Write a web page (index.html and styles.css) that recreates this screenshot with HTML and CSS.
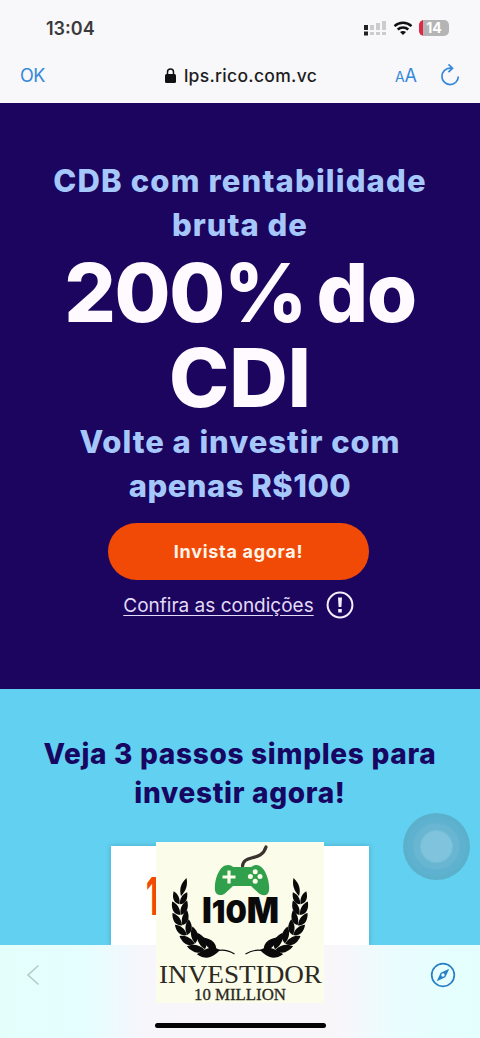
FILE: index.html
```html
<!DOCTYPE html>
<html lang="pt-BR">
<head>
  <meta charset="UTF-8" />
  <meta name="viewport" content="width=device-width, initial-scale=1.0" />
  <title>CDB 200% do CDI</title>
  <link rel="stylesheet" href="styles.css">
</head>
<body>
  <!-- Topo -->
  <header>
    <div class="status-bar">
      <span class="time">13:04</span>
      <div class="status-icons">
        <svg width="23" height="16" viewBox="0 0 23 16">
          <path fill="#222" d="M0 5h4v5H0zM0 11.500h4v4H0z"/>
          <path fill="#ccc" d="M6 5h4v5H6zM12 3h4v7h-4zM18 1h4v9h-4zM6 12h4v3H6zM12 12h4v3h-4zM18 12h4v3h-4z"/>
        </svg>
        <svg class="wifi" width="20" height="15" viewBox="0 0 20 15" fill="none" stroke="#111" stroke-width="2.500">
          <path d="M1.500 5.200C6.500.600 13.500.600 18.500 5.200M4.700 8.500c3-2.800 7.600-2.800 10.600 0"/>
          <path d="M10 14l-3-3c1.700-1.500 4.300-1.500 6 0z" fill="#111" stroke="none"/>
        </svg>
        <div class="battery"><span>14</span></div>
      </div>
    </div>
    <div class="url-bar">
      <a class="ok" href="#">OK</a>
      <div class="address">
        <svg width="11" height="15" viewBox="0 0 11 15">
          <rect x="0" y="6" width="11" height="9" rx="1.500" fill="#111"/>
          <path d="M2.500 7V4a3 3 0 0 1 6 0v3" fill="none" stroke="#111" stroke-width="1.500"/>
        </svg>
        <span>lps.rico.com.vc</span>
      </div>
      <div class="tools">
        <span class="font-size"><small>A</small>A</span>
        <svg width="20" height="22" viewBox="0 0 20 22" fill="none" stroke="#3489d9" stroke-width="1.700">
          <path d="M11 4.200H10a8.200 8.200 0 1 0 8.300 8.300"/>
          <path d="M8.500.400l4 3.800-4 3.900"/>
        </svg>
      </div>
    </div>
  </header>

  <!-- Oferta -->
  <section class="hero">
    <h2><span class="l1">CDB com rentabilidade</span><span class="l2">bruta de</span></h2>
    <h1><span class="l3">200% do</span><span class="l4">CDI</span></h1>
    <h2><span class="l5">Volte a investir com</span><span class="l6">apenas R$100</span></h2>
    <a class="btn" href="#">Invista agora!</a>
    <div class="conditions">
      <a href="#">Confira as condições</a>
      <svg width="28" height="28" viewBox="0 0 28 28">
        <circle cx="14" cy="14" r="12.400" fill="none" stroke="#f4effc" stroke-width="2"/>
        <path d="M12 6.500h4l-.6 9.500h-2.800zM12.200 18h3.600v3.400h-3.600z" fill="#f4effc"/>
      </svg>
    </div>
  </section>

  <!-- Passos -->
  <section class="steps">
    <h3><span class="l7">Veja 3 passos simples para</span><span class="l8">investir agora!</span></h3>
    <div class="card"><span class="number">1</span></div>
  </section>

  <!-- Barra inferior -->
  <footer>
    <div class="nav">
      <svg width="14" height="22" viewBox="0 0 14 22" fill="none" stroke="#b3ccc8" stroke-width="1.600">
        <path d="M12.500 1.500L2 11l10.500 9.500"/>
      </svg>
      <svg width="26" height="26" viewBox="0 0 26 26">
        <circle cx="13" cy="13" r="11.300" fill="none" stroke="#287fc6" stroke-width="1.700"/>
        <path fill="#287fc6" fill-rule="evenodd" d="M19.300 6.700l-4 8.500-8.600 4.100 4-8.500zM13 11.300a1.700 1.700 0 1 0 0 3.400 1.700 1.700 0 0 0 0-3.400z"/>
      </svg>
    </div>
    <div class="home-indicator"></div>
  </footer>

  <div class="touch"></div>

  <!-- Logo -->
  <svg class="logo" width="168" height="161" viewBox="0 0 168 161">
    <defs>
      <g id="leaves">
        <path d="M-.2 7C-7 6-9 0-7.500-7-3-5 .5 0-.2 7z"/>
        <path d="M.2 7C7 6 9 0 7.500-7 3-5-.5 0 .2 7z"/>
      </g>
      <g id="branch">
        <path d="M30.500 36c1.500 7-.5 13-5.500 18-2-7 0-13 5.500-18z"/>
        <use href="#leaves" transform="translate(24 56) rotate(4) scale(.9)"/>
        <use href="#leaves" transform="translate(24 66) rotate(-3)"/>
        <use href="#leaves" transform="translate(25 76.500) rotate(-10)"/>
        <use href="#leaves" transform="translate(28.500 86.500) rotate(-22)"/>
        <use href="#leaves" transform="translate(34.500 95.500) rotate(-36) scale(1.080)"/>
        <use href="#leaves" transform="translate(42.500 102.500) rotate(-52) scale(1.150)"/>
        <use href="#leaves" transform="translate(52 107) rotate(-68) scale(1.200)"/>
        <path d="M43 113c6-8 14-9 21-5-6 7-13 9-21 5z"/>
        <path d="M60 109c7-2 12-1 18.500 3" fill="none" stroke="#0a0a0a" stroke-width="1.200"/>
      </g>
    </defs>
    <rect width="168" height="161" fill="#fbfce9"/>
    <path d="M86.500 24c1-12 19-4 23.500-19" fill="none" stroke="#3b3230" stroke-width="3.200" stroke-linecap="round"/>
    <path fill="#31a04d" d="M69 23.500c4-1.500 7 0 8 1.500h18c2-1.500 5-3 8-1.500 7 3 11 17 10 25-1 6-7 6-11 2l-7-6.500H77L70 50.500c-4 4-10 3.500-11-2-1-9 3-22 10-25z"/>
    <path stroke="#fbfce9" stroke-width="3.200" d="M73 28.500v13M66.500 35h13"/>
    <g fill="#fbfce9">
      <circle cx="99.200" cy="29.700" r="2.500"/>
      <circle cx="99.200" cy="39.300" r="2.500"/>
      <circle cx="94.400" cy="34.500" r="2.500"/>
      <circle cx="104" cy="34.500" r="2.500"/>
    </g>
    <g fill="#0a0a0a">
      <use href="#branch"/>
      <use href="#branch" transform="translate(168 0) scale(-1 1)"/>
      <text class="brand" x="46" y="81" textLength="77" lengthAdjust="spacingAndGlyphs">I<tspan class="digits">10</tspan>M</text>
    </g>
    <text class="name" x="3" y="141" textLength="163" lengthAdjust="spacingAndGlyphs">INVESTIDOR</text>
    <text class="sub" x="38" y="157.500" textLength="92" lengthAdjust="spacingAndGlyphs">10 MILLION</text>
  </svg>
</body>
</html>
```
FILE: styles.css
```css
:root {
  --navy: #1b055f;
  --sky: #62d1f1;
  --light-blue: #a6c7fa;
  --orange: #f04a06;
  --ios-blue: #3489d9;
}

* {
  box-sizing: border-box;
  margin: 0;
  padding: 0;
}

body {
  font-family: Inter, sans-serif;
  width: 480px;
  height: 1038px;
  position: relative;
  overflow: hidden;
  display: flex;
  flex-direction: column;
}

svg {
  display: block;
}

a {
  text-decoration: none;
}

header {
  height: 103px;
  background: #f8f7f9;
}

.status-bar {
  height: 55px;
  padding: 1px 31px 0 46px;
  display: flex;
  align-items: center;
  justify-content: space-between;
}

.time {
  font-size: 18px;
  font-weight: 600;
  color: #3a3a3c;
}

.status-icons {
  display: flex;
  align-items: center;
  gap: 6px;
}

.battery {
  width: 30px;
  height: 16px;
  border-radius: 5px;
  background: linear-gradient(90deg, #dd2945 4px, #b4b4b5 4px);
  color: #fff;
  font-size: 14px;
  font-weight: 700;
  line-height: 16px;
  text-align: center;
}

.url-bar {
  height: 40px;
  padding: 0 20px;
  display: grid;
  grid-template-columns: 1fr auto 1fr;
  align-items: center;
}

.ok {
  color: var(--ios-blue);
  font-size: 18px;
  letter-spacing: -0.5px;
}

.address {
  display: flex;
  align-items: center;
  gap: 8px;
  padding-left: 2px;
  color: #1c1c1e;
  font-size: 17.5px;
  font-weight: 500;
  letter-spacing: 0.3px;
}

.tools {
  display: flex;
  align-items: center;
  justify-content: flex-end;
  gap: 23px;
}

.font-size {
  color: var(--ios-blue);
  font-size: 18px;
}

.font-size small {
  font-size: 14px;
}

.hero {
  height: 586px;
  padding-top: 56px;
  background: var(--navy);
  display: flex;
  flex-direction: column;
  align-items: center;
  text-align: center;
}

h1 span,
h2 span,
h3 span {
  display: block;
  white-space: nowrap;
}

h2 {
  color: var(--light-blue);
  font-size: 31px;
  font-weight: 800;
  line-height: 44px;
}

h1 {
  color: #fffaff;
  font-size: 81px;
  font-weight: 800;
  line-height: 85px;
  padding-top: 4px;
  margin-bottom: -1px;
}

.l1 {
  letter-spacing: 1.15px;
}

.l2 {
  letter-spacing: 1px;
}

.l3 {
  letter-spacing: -1.3px;
  word-spacing: -6px;
}

.l5 {
  letter-spacing: 0.95px;
}

.l6 {
  letter-spacing: 0.5px;
}

.l7,
.l8 {
  letter-spacing: 0.7px;
}

.btn {
  width: 261px;
  height: 57px;
  margin-top: 15px;
  margin-right: 3px;
  border-radius: 29px;
  background: var(--orange);
  color: #fff5e9;
  font-size: 18px;
  font-weight: 700;
  line-height: 57px;
  letter-spacing: 0.7px;
}

.conditions {
  display: flex;
  align-items: center;
  gap: 12px;
  margin-top: 11px;
  margin-right: 3px;
}

.conditions a {
  color: #e3daf8;
  font-size: 19px;
  text-decoration: underline;
  text-underline-offset: 3px;
}

.steps {
  height: 256px;
  padding-top: 46px;
  background: var(--sky);
  display: flex;
  flex-direction: column;
  align-items: center;
}

h3 {
  color: #170763;
  font-size: 28px;
  font-weight: 800;
  line-height: 39px;
  text-align: center;
}

.card {
  width: 258px;
  flex: 1;
  margin-top: 33px;
  padding: 19px 0 0 35px;
  background: #fff;
  box-shadow: 0 0 5px rgba(20, 80, 110, 0.35);
}

.number {
  display: inline-block;
  color: var(--orange);
  font-size: 52px;
  font-weight: 700;
  transform: scaleX(0.55);
  transform-origin: left;
}

footer {
  height: 93px;
  background: linear-gradient(90deg, #e3fffb 0, #e5feff 85px, #f7f6fb 145px, #f9f6fa 335px, #e9fdff 400px, #e3fffd 100%);
  position: relative;
}

.nav {
  display: flex;
  align-items: center;
  justify-content: space-between;
  padding: 17px 24px 0 26px;
}

.home-indicator {
  width: 171px;
  height: 5px;
  margin: 35px auto 0;
  border-radius: 3px;
  background: #050505;
}

.touch {
  position: absolute;
  left: 403px;
  top: 813px;
  width: 67px;
  height: 67px;
  border-radius: 50%;
  background: radial-gradient(circle, #7fc3dc 0 15px, #69b6d2 17px 22px, #5fb2cf 24px 28px, #5bb1cc 30px);
}

.logo {
  position: absolute;
  left: 156px;
  top: 842px;
}

.brand {
  font-size: 36px;
  font-weight: 900;
}

.digits {
  font-size: 32px;
}

.name,
.sub {
  font-family: "Liberation Serif", serif;
  fill: #2b2922;
}

.name {
  font-size: 26px;
}

.sub {
  font-size: 16px;
  stroke: #2b2922;
  stroke-width: 0.3px;
}
```
